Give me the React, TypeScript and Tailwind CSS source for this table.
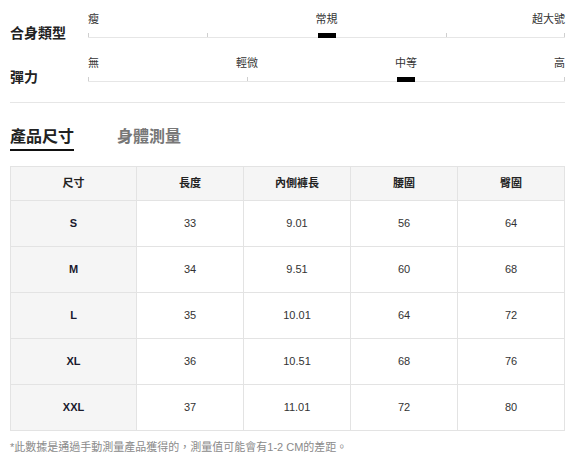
import React from "react";

const FONT = { fontFamily: '"Liberation Sans", "Noto Sans CJK TC", sans-serif' };

type Lbl = { text: string; pos: number };

function Scale({ labels, ticks, active }: { labels: Lbl[]; ticks: number[]; active: number }) {
  return (
    <div className="flex-1">
      <div className="relative h-[14px] text-[11px] leading-[14px] text-[#333]">
        {labels.map((l, i) => {
          const cls =
            l.pos === 0
              ? "absolute left-0 top-0 whitespace-nowrap"
              : l.pos === 100
              ? "absolute right-0 top-0 whitespace-nowrap"
              : "absolute top-0 -translate-x-1/2 whitespace-nowrap";
          return (
            <span key={i} className={cls} style={l.pos !== 0 && l.pos !== 100 ? { left: `${l.pos}%` } : undefined}>
              {l.text}
            </span>
          );
        })}
      </div>
      <div className="relative h-[12px] border-b border-[#e6e6e6]">
        {ticks.map((t, i) => (
          <span
            key={i}
            className="absolute bottom-0 h-[4px] w-px bg-[#cfcfcf]"
            style={{ left: t === 100 ? "calc(100% - 1px)" : `${t}%` }}
          />
        ))}
        <span
          className="absolute bottom-[-1px] h-[5px] w-[18px] -translate-x-1/2 bg-black"
          style={{ left: `${active}%` }}
        />
      </div>
    </div>
  );
}

const rows = [
  ["S", "33", "9.01", "56", "64"],
  ["M", "34", "9.51", "60", "68"],
  ["L", "35", "10.01", "64", "72"],
  ["XL", "36", "10.51", "68", "76"],
  ["XXL", "37", "11.01", "72", "80"],
];

export default function App() {
  return (
    <div className="w-[579px] h-[475px] bg-white pl-[10px] pr-[14px] pt-[12px]" style={FONT}>
      <div className="flex items-start">
        <div className="w-[78px] h-[26px] pt-[13px] text-[14px] leading-[16px] font-bold text-[#222]">合身類型</div>
        <Scale
          labels={[
            { text: "瘦", pos: 0 },
            { text: "常規", pos: 50 },
            { text: "超大號", pos: 100 },
          ]}
          ticks={[0, 25, 75, 100]}
          active={50}
        />
      </div>
      <div className="flex items-start mt-[18px]">
        <div className="w-[78px] h-[26px] pt-[13px] text-[14px] leading-[16px] font-bold text-[#222]">彈力</div>
        <Scale
          labels={[
            { text: "無", pos: 0 },
            { text: "輕微", pos: 33.33 },
            { text: "中等", pos: 66.67 },
            { text: "高", pos: 100 },
          ]}
          ticks={[0, 33.33, 66.67, 100]}
          active={66.67}
        />
      </div>
      <div className="mt-[20px] border-t border-[#e6e6e6]" />
      <div className="mt-[22px] flex items-end gap-[43px] text-[16px] leading-[24px] font-bold">
        <div className="border-b-2 border-[#111] text-[#222]">產品尺寸</div>
        <div className="pb-[2px] text-[#777]">身體測量</div>
      </div>
      <table className="mt-[15px] w-[555px] border-collapse table-fixed text-[11px]">
        <colgroup>
          <col className="w-[126px]" />
          <col />
          <col />
          <col />
          <col />
        </colgroup>
        <thead>
          <tr className="h-[34px] bg-[#f5f5f5]">
            {["尺寸", "長度", "內側褲長", "腰圍", "臀圍"].map((h) => (
              <th key={h} className="border border-[#e3e3e3] font-bold text-[#222] text-center align-middle">
                {h}
              </th>
            ))}
          </tr>
        </thead>
        <tbody>
          {rows.map((r) => (
            <tr key={r[0]} className="h-[46px]">
              {r.map((c, i) => (
                <td
                  key={i}
                  className={
                    i === 0
                      ? "border border-[#e3e3e3] bg-[#f5f5f5] font-bold text-[#1a1a2e] text-center align-middle"
                      : "border border-[#e3e3e3] text-[#333] text-center align-middle"
                  }
                >
                  {c}
                </td>
              ))}
            </tr>
          ))}
        </tbody>
      </table>
      <div className="mt-[8px] text-[11px] leading-[16px] text-[#8a8a8a]">
        *此數據是通過手動測量產品獲得的，測量值可能會有1-2 CM的差距。
      </div>
    </div>
  );
}
